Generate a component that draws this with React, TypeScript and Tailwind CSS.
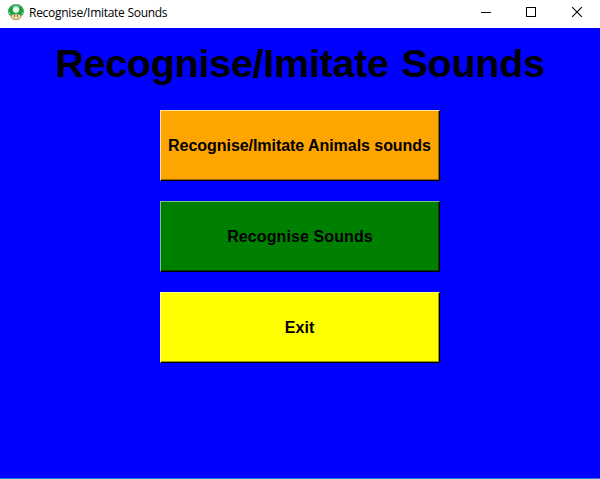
type SoundButtonProps = { label: string; tone: string; inner: string; spacing: string };

function MushroomIcon() {
  return (
    <svg width="16" height="16" viewBox="0 0 16 16" className="shrink-0">
      <path d="M3.500 9.500h9l.5 3.200q-.8 3-5 3t-5-3z" fill="#f0d6a4" stroke="#6e5a3a" strokeWidth=".6" />
      <path d="M.5 7.500C.5 3.300 3.600.4 8 .4s7.500 2.900 7.500 7.100c0 2-.6 3.600-2.200 3.900-1.200-1-2.800-1.400-5.300-1.400s-4.100.4-5.300 1.400C1.100 11.100.5 9.500.5 7.500z" fill="#12a63c" stroke="#3f7f50" strokeWidth=".6" />
      <path d="M3.500 3.200Q8-.8 12.500 3.200 8 1.600 3.500 3.200z" fill="#7bd08d" />
      <ellipse cx="8" cy="5.700" rx="3.200" ry="3.100" fill="#eefbea" />
      <path d="M1 8q1.700.5 1.600 2.600Q1 10.300 1 8zM15 8q-1.700.5-1.600 2.600Q15 10.300 15 8z" fill="#d3ebd2" />
      <path d="M6.500 11v1.800M9.500 11v1.800" stroke="#4a3a26" strokeWidth=".8" />
    </svg>
  );
}

function TitleBar() {
  return (
    <header className="flex h-7 items-start justify-between bg-white text-black">
      <div className="flex h-6 items-center gap-[5px] pl-2">
        <MushroomIcon />
        <span className="whitespace-nowrap pt-[2px] font-['Open_Sans','Noto_Sans',sans-serif] text-[12px] leading-6 tracking-[-0.28px]">
          Recognise/Imitate Sounds
        </span>
      </div>
      <div className="flex">
        <button aria-label="Minimize" className="h-6 w-[46px]">
          <svg width="46" height="24" shapeRendering="crispEdges"><path d="M19 12h10v1H19z" /></svg>
        </button>
        <button aria-label="Maximize" className="h-6 w-[46px]">
          <svg width="46" height="24" shapeRendering="crispEdges"><path d="M18.500 7.500h9v9h-9z" fill="none" stroke="black" /></svg>
        </button>
        <button aria-label="Close" className="h-6 w-[46px]">
          <svg width="46" height="24"><path d="M18.200 7.200l9.600 9.600M27.800 7.200l-9.600 9.600" stroke="black" strokeWidth="1.100" /></svg>
        </button>
      </div>
    </header>
  );
}

function SoundButton({ label, tone, inner, spacing }: SoundButtonProps) {
  return (
    <button className={`h-[71px] w-[280px] border border-r-black border-b-black ${tone}`}>
      <span className={`flex h-full items-center justify-center whitespace-nowrap border-r border-b pt-[2px] text-base font-bold text-black ${inner} ${spacing}`}>
        {label}
      </span>
    </button>
  );
}

export default function App() {
  return (
    <div className="flex h-[479px] w-[600px] flex-col overflow-hidden border-b border-[#1883d7] bg-[#0000ff] font-['Liberation_Sans',Arial,sans-serif]">
      <TitleBar />
      <main className="flex flex-col items-center">
        <h1 className="mt-3 h-[70px] whitespace-nowrap text-[39.500px] font-bold leading-[46px] tracking-[-0.26px] text-black [word-spacing:2px]">
          Recognise/Imitate Sounds
        </h1>
        <div className="flex flex-col gap-5">
          <SoundButton label="Recognise/Imitate Animals sounds" tone="bg-[#ffa500] border-t-[#ffdf9d] border-l-[#ffdf9d]" inner="border-[#996300]" spacing="tracking-[-0.05px]" />
          <SoundButton label="Recognise Sounds" tone="bg-[#008000] border-t-[#7fbf7f] border-l-[#7fbf7f]" inner="border-[#004000]" spacing="tracking-[0.1px] pl-px" />
          <SoundButton label="Exit" tone="bg-[#ffff00] border-t-[#ffff7f] border-l-[#ffff7f]" inner="border-[#999900]" spacing="tracking-[0.1px]" />
        </div>
      </main>
    </div>
  );
}
